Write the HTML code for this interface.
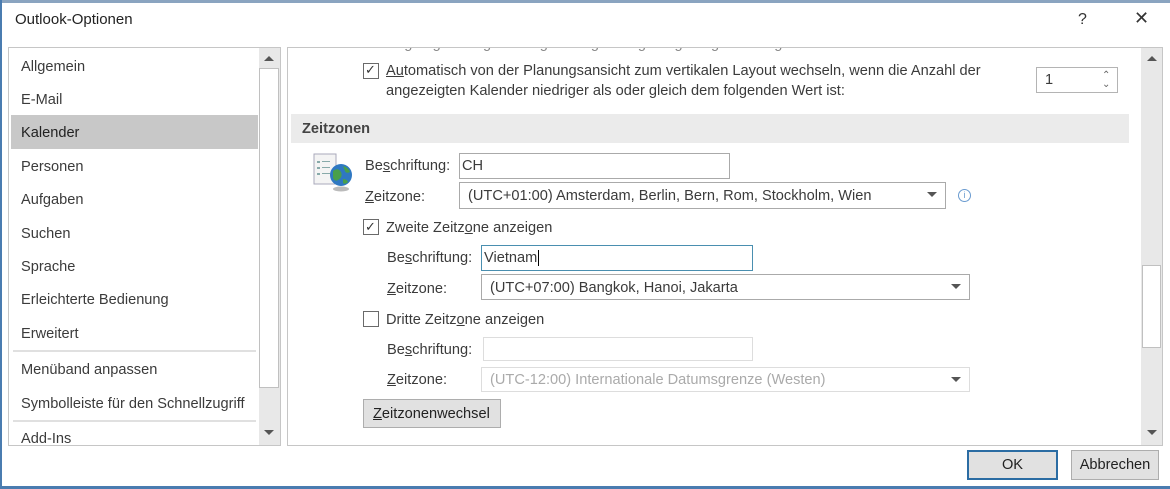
<!DOCTYPE html>
<html><head><meta charset="utf-8"><style>
*{box-sizing:border-box;margin:0;padding:0}
body{width:1170px;height:489px;overflow:hidden;background:#fff;font-family:"Liberation Sans",sans-serif;font-size:14.6px;color:#3b3b3b;position:relative}
.a{position:absolute;white-space:nowrap}
.box{position:absolute;border:1px solid #b4b4b4;background:#fff}
.t{position:absolute;white-space:nowrap;line-height:16px}
.cb{position:absolute;width:16px;height:16px;border:1px solid #6a6a6a;background:#fff}
.dd{position:absolute;right:8px;top:9px;width:0;height:0;border-left:5px solid transparent;border-right:5px solid transparent;border-top:5px solid #555}
u{text-decoration:underline}
</style></head><body>
<div class="a" style="left:0;top:0;width:1170px;height:3px;background:#8aa4c0"></div>
<div class="a" style="left:0;top:0;width:2px;height:489px;background:#4a7cb0"></div>
<div class="a" style="left:0;top:486px;width:1170px;height:3px;background:#4a7cb0"></div>
<div class="t" style="left:15px;top:12px;font-size:15px;color:#222">Outlook-Optionen</div>
<div class="t" style="left:1078px;top:12px;font-size:16px;color:#333">?</div>
<div class="t" style="left:1134px;top:10px;font-size:18px;color:#333">✕</div>

<!-- left panel -->
<div class="box" style="left:8px;top:47px;width:273px;height:399px;border-color:#c6c6c6;overflow:hidden">
  <div class="a" style="left:2px;top:67px;width:247px;height:34px;background:#c8c8c8"></div>
  <div class="t" style="left:12px;top:11px">Allgemein</div>
  <div class="t" style="left:12px;top:44px">E-Mail</div>
  <div class="t" style="left:12px;top:77px;color:#222">Kalender</div>
  <div class="t" style="left:12px;top:111px">Personen</div>
  <div class="t" style="left:12px;top:144px">Aufgaben</div>
  <div class="t" style="left:12px;top:178px">Suchen</div>
  <div class="t" style="left:12px;top:211px">Sprache</div>
  <div class="t" style="left:12px;top:244px">Erleichterte Bedienung</div>
  <div class="t" style="left:12px;top:278px">Erweitert</div>
  <div class="a" style="left:4px;top:302px;width:243px;height:2px;background:#e0e0e0"></div>
  <div class="t" style="left:12px;top:314px">Menüband anpassen</div>
  <div class="t" style="left:12px;top:348px">Symbolleiste für den Schnellzugriff</div>
  <div class="a" style="left:4px;top:372px;width:243px;height:2px;background:#e0e0e0"></div>
  <div class="t" style="left:12px;top:383px">Add-Ins</div>
  <div class="a" style="left:250px;top:0;width:21px;height:399px;background:#e8e8e8"></div>
  <div class="a" style="left:250px;top:20px;width:20px;height:320px;background:#fff;border:1px solid #c0c0c0"></div>
  <div class="a" style="left:255px;top:8px;border-left:5px solid transparent;border-right:5px solid transparent;border-bottom:5px solid #555"></div>
  <div class="a" style="left:255px;top:382px;border-left:5px solid transparent;border-right:5px solid transparent;border-top:5px solid #555"></div>
</div>

<!-- right panel -->
<div class="box" style="left:287px;top:47px;width:876px;height:399px;border-color:#c6c6c6;overflow:hidden">
  <div class="t" style="left:100px;top:-12px;color:#888">ungen gleich  ngen    an  ngen  llung  anzeigen  ngen  ngen anzeigen</div>
  <div class="cb" style="left:75px;top:15px"></div><div class="t" style="left:77px;top:14px;font-size:13px;color:#333">✓</div>
  <div class="t" style="left:98px;top:15px"><u>Au</u>tomatisch von der Planungsansicht zum vertikalen Layout wechseln, wenn die Anzahl der</div>
  <div class="t" style="left:98px;top:35px">angezeigten Kalender niedriger als oder gleich dem folgenden Wert ist:</div>
  <div class="box" style="left:748px;top:19px;width:82px;height:26px"><div class="t" style="left:8px;top:4px">1</div><div class="t" style="left:65px;top:0px;font-size:10px;color:#666">⌃</div><div class="t" style="left:65px;top:9px;font-size:10px;color:#666">⌄</div></div>
  <div class="a" style="left:3px;top:66px;width:838px;height:29px;background:#ebebeb"></div>
  <div class="t" style="left:14px;top:73px;font-weight:bold;color:#444">Zeitzonen</div>
  <svg class="a" style="left:25px;top:105px" width="42" height="40" viewBox="0 0 42 40">
    <rect x="1" y="1" width="22" height="30" fill="#f4f4f4" stroke="#aab"/>
    <g fill="#8aa"><rect x="4" y="8" width="3" height="2"/><rect x="4" y="14" width="3" height="2"/><rect x="4" y="20" width="3" height="2"/><rect x="9" y="8" width="8" height="1"/><rect x="9" y="14" width="8" height="1"/><rect x="9" y="20" width="8" height="1"/></g>
    <ellipse cx="28" cy="36" rx="8" ry="2.5" fill="#bbb"/>
    <circle cx="28" cy="22" r="11" fill="#2f78c2"/>
    <path d="M20 18 q5 -4 8 1 q2 5 -3 8 q-3 2 -5 -2z M30 13 q5 1 7 6 q-4 2 -5 -1z M30 26 q4 0 5 3 q-3 3 -5 1z" fill="#49a04a"/>
  </svg>
  <div class="t" style="left:77px;top:110px">Be<u>s</u>chriftung:</div>
  <div class="box" style="left:171px;top:105px;width:271px;height:26px;border-color:#aaa"><div class="t" style="left:2px;top:4px">CH</div></div>
  <div class="t" style="left:77px;top:141px"><u>Z</u>eitzone:</div>
  <div class="box" style="left:171px;top:134px;width:487px;height:27px;border-color:#aaa"><div class="t" style="left:8px;top:5px">(UTC+01:00) Amsterdam, Berlin, Bern, Rom, Stockholm, Wien</div><div class="dd"></div></div>
  <div class="a" style="left:670px;top:141px;width:13px;height:13px;border:1px solid #6a9bd0;border-radius:50%;color:#6a9bd0;font-size:9px;text-align:center;line-height:11px">i</div>
  <div class="cb" style="left:75px;top:171px"></div><div class="t" style="left:77px;top:171px;font-size:13px;color:#333">✓</div>
  <div class="t" style="left:98px;top:172px">Zweite Zeitz<u>o</u>ne anzeigen</div>
  <div class="t" style="left:99px;top:202px">Be<u>s</u>chriftung:</div>
  <div class="box" style="left:193px;top:197px;width:272px;height:26px;border-color:#4a8fb0"><div class="t" style="left:2px;top:4px">Vietnam<span style="border-left:1px solid #000;margin-left:1px"></span></div></div>
  <div class="t" style="left:99px;top:233px"><u>Z</u>eitzone:</div>
  <div class="box" style="left:193px;top:226px;width:489px;height:26px;border-color:#aaa"><div class="t" style="left:8px;top:5px">(UTC+07:00) Bangkok, Hanoi, Jakarta</div><div class="dd"></div></div>
  <div class="cb" style="left:75px;top:263px"></div>
  <div class="t" style="left:98px;top:264px">Dritte Zeitz<u>o</u>ne anzeigen</div>
  <div class="t" style="left:99px;top:294px">Be<u>s</u>chriftung:</div>
  <div class="box" style="left:195px;top:289px;width:270px;height:24px;border-color:#ddd"></div>
  <div class="t" style="left:99px;top:324px"><u>Z</u>eitzone:</div>
  <div class="box" style="left:193px;top:319px;width:489px;height:25px;border-color:#ddd"><div class="t" style="left:8px;top:4px;color:#aaa">(UTC-12:00) Internationale Datumsgrenze (Westen)</div><div class="dd"></div></div>
  <div class="a" style="left:75px;top:351px;width:138px;height:29px;background:#e1e1e1;border:1px solid #adadad"><div class="t" style="left:9px;top:6px;color:#222"><u>Z</u>eitzonenwechsel</div></div>
  <div class="a" style="left:853px;top:0;width:21px;height:397px;background:#e8e8e8"></div>
  <div class="a" style="left:854px;top:217px;width:19px;height:83px;background:#fff;border:1px solid #c0c0c0"></div>
  <div class="a" style="left:859px;top:8px;border-left:5px solid transparent;border-right:5px solid transparent;border-bottom:5px solid #555"></div>
  <div class="a" style="left:859px;top:382px;border-left:5px solid transparent;border-right:5px solid transparent;border-top:5px solid #555"></div>
</div>

<div class="a" style="left:967px;top:450px;width:91px;height:30px;background:#e1e1e1;border:2px solid #2b6ca3;text-align:center;line-height:26px;color:#222">OK</div>
<div class="a" style="left:1071px;top:450px;width:88px;height:30px;background:#e1e1e1;border:1px solid #adadad;text-align:center;line-height:28px;color:#222">Abbrechen</div>
</body></html>
